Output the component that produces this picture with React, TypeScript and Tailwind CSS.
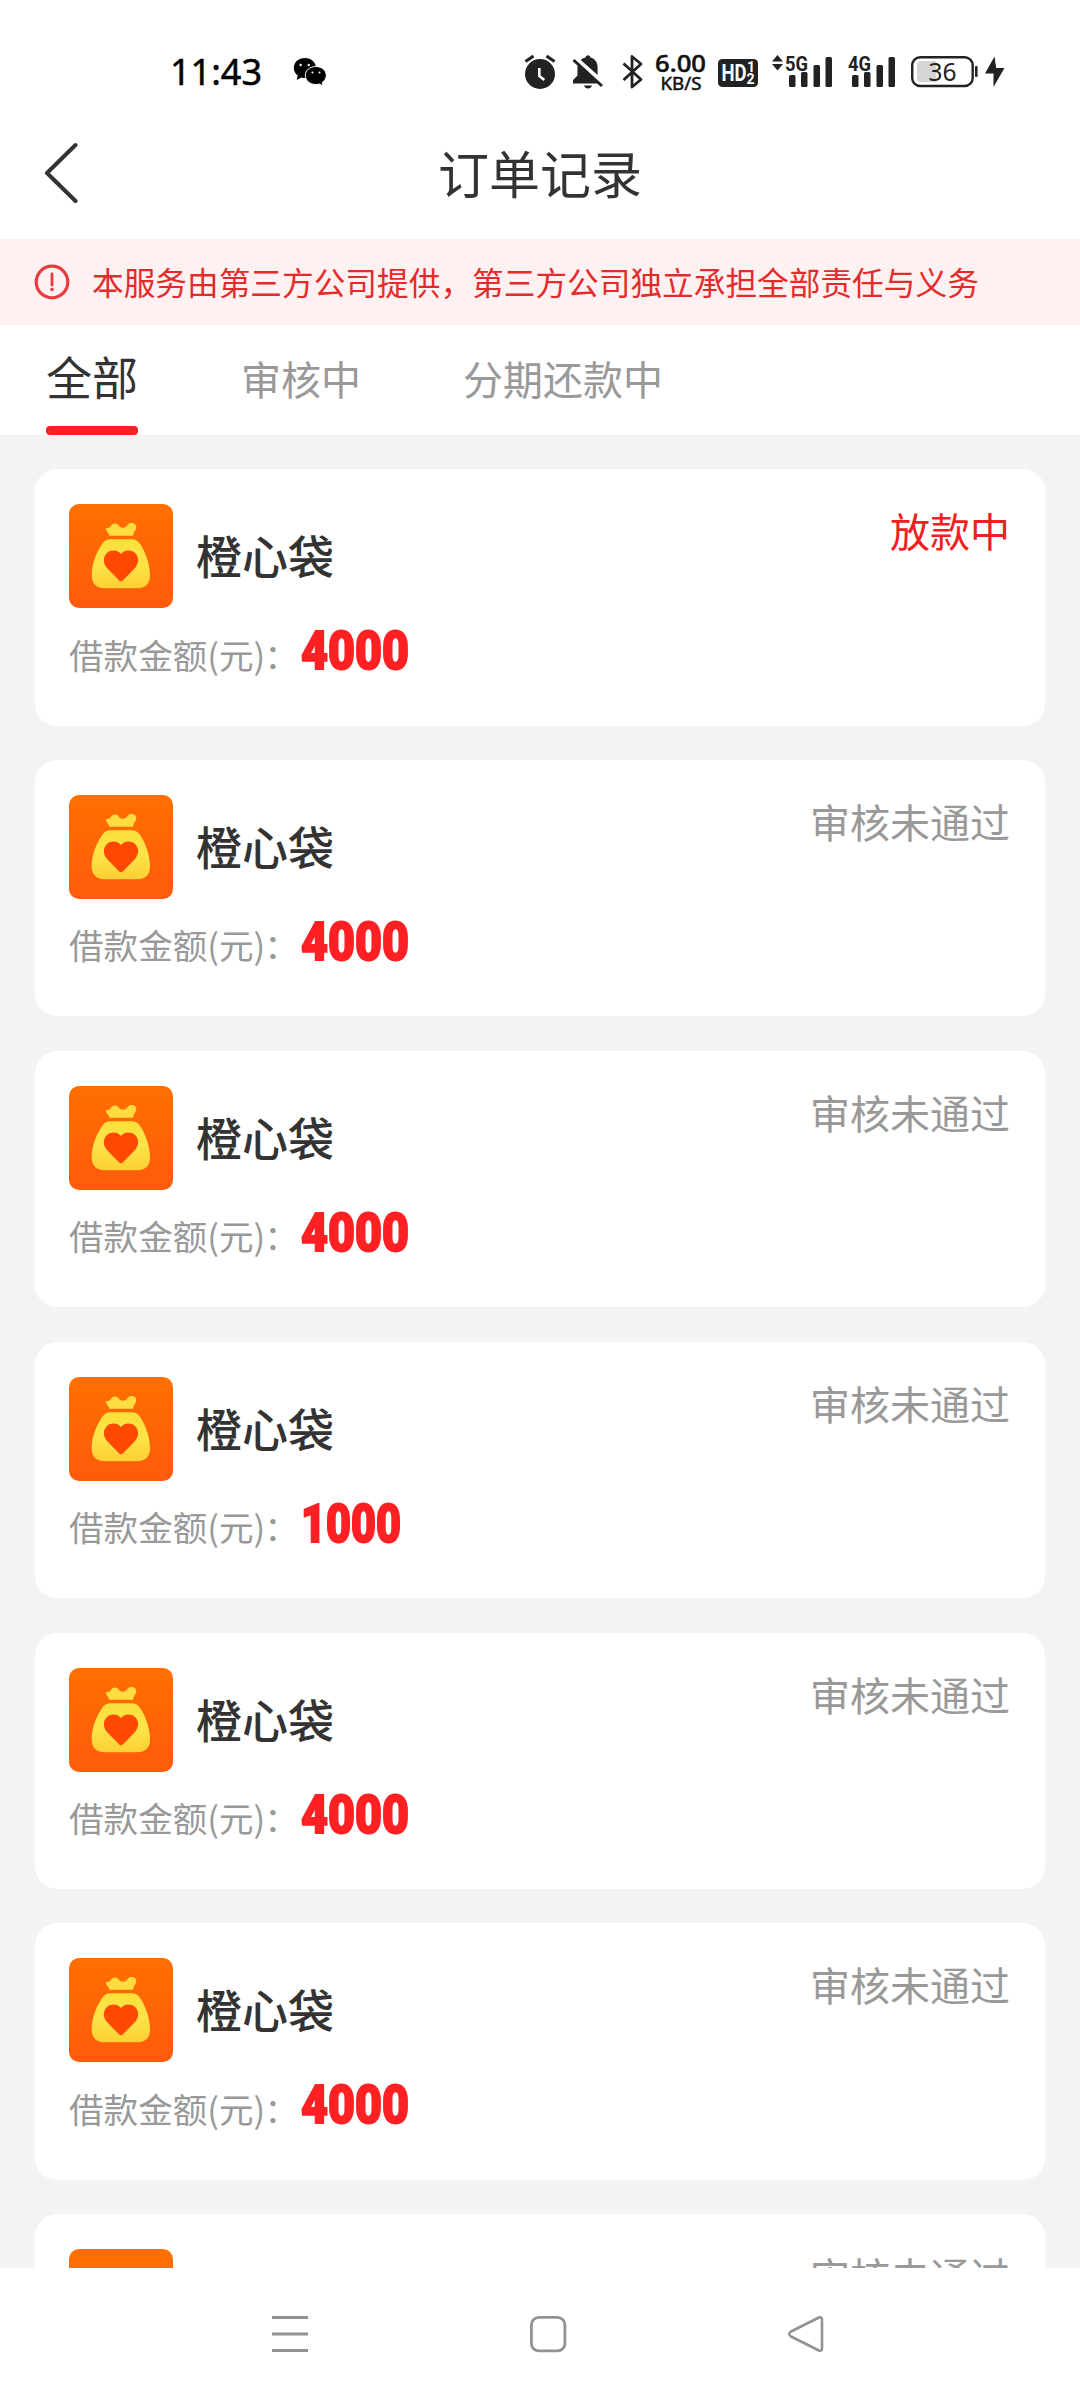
import React from "react";

const orders = [
	{ id: 1, amount: "4000", status: "放款中", active: true },
	{ id: 2, amount: "4000", status: "审核未通过" },
	{ id: 3, amount: "4000", status: "审核未通过" },
	{ id: 4, amount: "1000", status: "审核未通过" },
	{ id: 5, amount: "4000", status: "审核未通过" },
	{ id: 6, amount: "4000", status: "审核未通过" },
	{ id: 7, amount: "4000", status: "审核未通过" },
];

function SignalBars({ label, arrows }: { label: string; arrows?: boolean }) {
	return (
		<svg width="62" height="34" viewBox="0 0 62 34" fill="#222" className="shrink-0 overflow-visible">
			{arrows && <path d="M5.500 1l5.500 6.500H0zM5.500 16.500l5.500-6.500H0z" />}
			<text
				x="13"
				y="16.500"
				textLength="23"
				lengthAdjust="spacingAndGlyphs"
				className="font-['Roboto',sans-serif] text-[21px] font-bold"
			>
				{label}
			</text>
			<rect x="17" y="21" width="6.500" height="12" rx="1.500" />
			<rect x="29" y="18" width="6.500" height="15" rx="1.500" />
			<rect x="41.500" y="11" width="6.500" height="22" rx="1.500" />
			<rect x="53.500" y="3" width="6.500" height="30" rx="1.500" />
		</svg>
	);
}

function StatusBar() {
	return (
		<div className="flex h-[120px] items-start pt-[54px] pl-[170px] text-[#222]">
			<svg width="94" height="34" viewBox="0 0 94 34" fill="#000" className="shrink-0 overflow-visible">
				<text
					x="0"
					y="30.500"
					textLength="92"
					stroke="#000"
					strokeWidth=".5"
					className="font-['Noto_Sans',sans-serif] text-[36px]"
				>
					11:43
				</text>
			</svg>
			<svg width="34" height="34" viewBox="0 0 34 34" className="ml-[29px] shrink-0">
				<path
					d="M12 4C5.500 4 .800 8.300.800 14c0 3.200 1.500 5.800 4 7.600L3.700 26l4.600-2.600c1.300.400 2.600.500 4 .500C18.500 24 23 19.500 23 14S18.500 4 12 4z"
					fill="#000"
				/>
				<path
					d="M22.800 12.500c-6 0-10.500 3.900-10.500 9s4.500 9 10.500 9c1.300 0 2.500-.200 3.600-.500l3.800 2-1-3.500c2.500-1.700 4.100-4.100 4.100-7 0-5.100-4.500-9-10.500-9z"
					fill="#000"
					stroke="#fff"
					strokeWidth="1"
				/>
				<circle cx="7.700" cy="11" r="1.200" fill="#fff" />
				<circle cx="15.700" cy="11" r="1.200" fill="#fff" />
				<circle cx="19.500" cy="18.500" r="1" fill="#fff" />
				<circle cx="26.500" cy="18.500" r="1" fill="#fff" />
			</svg>
			<svg width="32" height="36" viewBox="0 0 32 36" className="ml-[197px] shrink-0">
				<circle cx="16" cy="20" r="15" fill="#222" />
				<path d="M1.500 7.500L9.500 2M30.500 7.500L22.500 2" stroke="#222" strokeWidth="3.200" />
				<path d="M15.300 14v8l5 4" stroke="#fff" strokeWidth="2.600" fill="none" />
			</svg>
			<svg width="32" height="36" viewBox="0 0 32 36" className="ml-[16px] shrink-0">
				<path
					d="M16 1.200c1.400 0 2.300 1 2.400 2.200 4.600 1.200 7.200 5 7.200 9.600v8.500l4 4.500v3.500H1V26l4.500-4.500V13c0-4.600 3.100-8.400 8.100-9.600.100-1.200 1-2.200 2.400-2.200z"
					fill="#222"
				/>
				<path d="M12 31.500h8c-.600 2-2 3-4 3s-3.400-1-4-3z" fill="#222" />
				<path d="M3.500 4.500L32 30" stroke="#fff" strokeWidth="5" />
				<path d="M1.500 6L30 32" stroke="#222" strokeWidth="3" />
			</svg>
			<svg width="22" height="36" viewBox="0 0 22 36" className="ml-[18px] shrink-0">
				<path
					d="M1.500 9.500L19 25.500 10 33V2.500L19 10 1.500 26"
					fill="none"
					stroke="#222"
					strokeWidth="2.800"
					strokeLinejoin="round"
				/>
			</svg>
			<svg width="52" height="38" viewBox="0 0 52 38" fill="#111" className="ml-[11px] shrink-0 overflow-visible">
				<text
					x="0"
					y="17.500"
					textLength="51"
					lengthAdjust="spacingAndGlyphs"
					stroke="#111"
					strokeWidth=".5"
					className="font-['Noto_Sans',sans-serif] text-[24px] font-medium"
				>
					6.00
				</text>
				<text
					x="5.500"
					y="36"
					textLength="41"
					lengthAdjust="spacingAndGlyphs"
					stroke="#111"
					strokeWidth=".5"
					className="font-['Noto_Sans',sans-serif] text-[18px]"
				>
					KB/S
				</text>
			</svg>
			<svg width="40" height="34" viewBox="0 0 40 34" className="ml-[11px] shrink-0 overflow-visible">
				<rect y="5" width="40" height="28" rx="4.500" fill="#222" />
				<g fill="#fff" className="font-['Roboto',sans-serif] font-bold">
					<text x="3.500" y="27" textLength="25" lengthAdjust="spacingAndGlyphs" className="text-[23px]">
						HD
					</text>
					<text x="29" y="18" className="text-[14px]">
						1
					</text>
					<text x="28.500" y="30" className="text-[14px]">
						2
					</text>
				</g>
			</svg>
			<div className="ml-[14px] flex">
				<SignalBars label="5G" arrows />
			</div>
			<div className="ml-px flex">
				<SignalBars label="4G" />
			</div>
			<svg width="68" height="34" viewBox="0 0 68 34" className="ml-[14px] shrink-0 overflow-visible">
				<rect x="1.200" y="3.200" width="60.500" height="28.800" rx="8" fill="none" stroke="#222" strokeWidth="2.400" />
				<path d="M10 7h15v21H10a4 4 0 01-4-4V11a4 4 0 014-4z" fill="#d5d5d5" />
				<rect x="64" y="12" width="2.600" height="11" rx="1" fill="#222" />
				<text
					x="17.500"
					y="26.500"
					textLength="28"
					lengthAdjust="spacingAndGlyphs"
					fill="#222"
					className="font-['Noto_Sans',sans-serif] text-[25px]"
				>
					36
				</text>
			</svg>
			<svg width="20" height="34" viewBox="0 0 20 34" className="ml-[6px] shrink-0">
				<path d="M9.500 2.500L0 19.500h8.500V33L19.500 14h-8.300z" fill="#222" />
			</svg>
		</div>
	);
}

function BagLogo() {
	return (
		<svg viewBox="0 0 312 312" className="size-[104px] shrink-0 rounded-[10px]">
			<defs>
				<linearGradient id="tile" x1="0" y1="0" x2="0" y2="1">
					<stop offset="0" stopColor="#ff7000" />
					<stop offset="1" stopColor="#ff5a0c" />
				</linearGradient>
				<linearGradient id="bag" x1="0" y1="0" x2="0" y2="1">
					<stop offset="0" stopColor="#fbe03a" />
					<stop offset=".5" stopColor="#fde44a" />
					<stop offset="1" stopColor="#fdcf32" />
				</linearGradient>
			</defs>
			<rect width="312" height="312" fill="url(#tile)" />
			<path
				d="M110 73c10 0 14-4 18-10 5-6 15-6 20 0 5 8 13 11 22 6 6-4 6-10 14-12 10-2 19 5 18 13-1 9-6 10-10 25h-71c-2-9-9-11-11-22z"
				fill="#ffdc40"
			/>
			<path
				d="M124 106h65c14 0 22 9 30 23 13 23 24 55 24 85 0 26-14 39-40 39h-94c-26 0-41-13-41-39 0-30 11-62 26-85 8-14 16-23 30-23z"
				fill="url(#bag)"
			/>
			<path
				d="M156 232c-4 0-6-3-9-6l-33-34c-13-15-12-34 0-45 12-10 31-10 42 3 11-13 30-13 42-3 12 11 13 30 0 45l-33 34c-3 3-5 6-9 6z"
				fill="#ff4800"
			/>
		</svg>
	);
}

function OrderCard({ order }: any) {
	return (
		<div className="flex h-[256.500px] shrink-0 flex-col rounded-[22px] bg-white pt-[35px] pr-[35px] pl-[34px]">
			<div className="flex justify-between">
				<div className="flex items-center">
					<BagLogo />
					<div className="ml-[23px] pb-1 text-[46px] leading-[60px] font-medium text-[#333]">橙心袋</div>
				</div>
				<div
					className={
						order.active
							? "text-[40px] leading-[52px] text-[#f02020]"
							: "text-[40px] leading-[52px] text-[#999]"
					}
				>
					{order.status}
				</div>
			</div>
			<div className="mt-[14px] flex h-[64px] items-center">
				<span className="w-[232px] shrink-0 pt-px text-[34.600px] whitespace-nowrap text-[#999]">
					借款金额(元)<span className="-ml-px">：</span>
				</span>
				<svg
					width="120"
					height="64"
					viewBox="0 0 120 64"
					fill="#ff2024"
					stroke="#ff2024"
					strokeWidth="2"
					className="overflow-visible"
				>
					<text
						x="0"
						y="46.500"
						textLength={order.amount.startsWith("1") ? 100 : 108}
						lengthAdjust="spacingAndGlyphs"
						className="font-['Roboto',sans-serif] text-[54px] font-black"
					>
						{order.amount}
					</text>
				</svg>
			</div>
		</div>
	);
}

export default function App() {
	return (
		<div className="flex h-[2400px] w-[1080px] flex-col overflow-hidden bg-white font-['Noto_Sans_CJK_SC',sans-serif]">
			<StatusBar />
			<header className="grid h-[119px] grid-cols-3 items-start text-[#333]">
				<svg width="34" height="64" viewBox="0 0 34 64" className="mt-[21px] ml-[44px]">
					<path
						d="M31.500 4L3 32l28.500 28"
						fill="none"
						stroke="#333"
						strokeWidth="4"
						strokeLinecap="round"
						strokeLinejoin="round"
					/>
				</svg>
				<h1 className="mt-[16px] text-center text-[51px] leading-[72px]">订单记录</h1>
			</header>
			<div className="flex h-[86px] items-center bg-[#fef1f1] pl-[34px] text-[#e52a2a]">
				<svg width="36" height="36" viewBox="0 0 36 36" className="shrink-0">
					<circle cx="18" cy="18" r="15.800" fill="none" stroke="#ea3a40" strokeWidth="3.200" />
					<path d="M18 10v11" stroke="#ea3a40" strokeWidth="2.800" strokeLinecap="round" />
					<circle cx="18" cy="25.500" r="1.800" fill="#ea3a40" />
				</svg>
				<p className="ml-[22px] text-[31.680px] whitespace-nowrap">
					本服务由第三方公司提供，第三方公司独立承担全部责任与义务
				</p>
			</div>
			<nav className="flex h-[110px] shrink-0 items-start pl-[46px] text-[40px] leading-[60px] text-[#999]">
				<div className="flex h-full w-[92px] flex-col justify-between pt-[20px] text-[46px] text-[#333]">
					全部
					<span className="h-[9px] rounded-[4px] bg-[#ff2024]" />
				</div>
				<div className="mt-[23px] ml-[103px]">审核中</div>
				<div className="mt-[23px] ml-[102px]">分期还款中</div>
			</nav>
			<main className="flex h-[1833px] shrink-0 flex-col gap-[34.400px] overflow-hidden bg-[#f3f3f3] px-[35px] pt-[34px]">
				{orders.map((order) => (
					<OrderCard key={order.id} order={order} />
				))}
			</main>
			<footer className="flex h-[132px] shrink-0 items-center pl-[271px]">
				<svg width="38" height="38" viewBox="0 0 38 38" stroke="#929292" strokeWidth="3">
					<path d="M1 2.500h36M1 19h36M1 35.500h36" />
				</svg>
				<svg width="38" height="38" viewBox="0 0 38 38" fill="none" stroke="#929292" strokeWidth="2.800" className="ml-[220px]">
					<rect x="2.400" y="2.400" width="33.500" height="33.500" rx="7.500" />
				</svg>
				<svg width="38" height="38" viewBox="0 0 38 38" fill="none" stroke="#929292" strokeWidth="2.600" className="ml-[220px]">
					<path d="M32 2.500L4 16.500q-3.500 2.500 0 5L32 35.500q3 1 3-2v-29q0-3-3-2z" strokeLinejoin="round" />
				</svg>
			</footer>
		</div>
	);
}
